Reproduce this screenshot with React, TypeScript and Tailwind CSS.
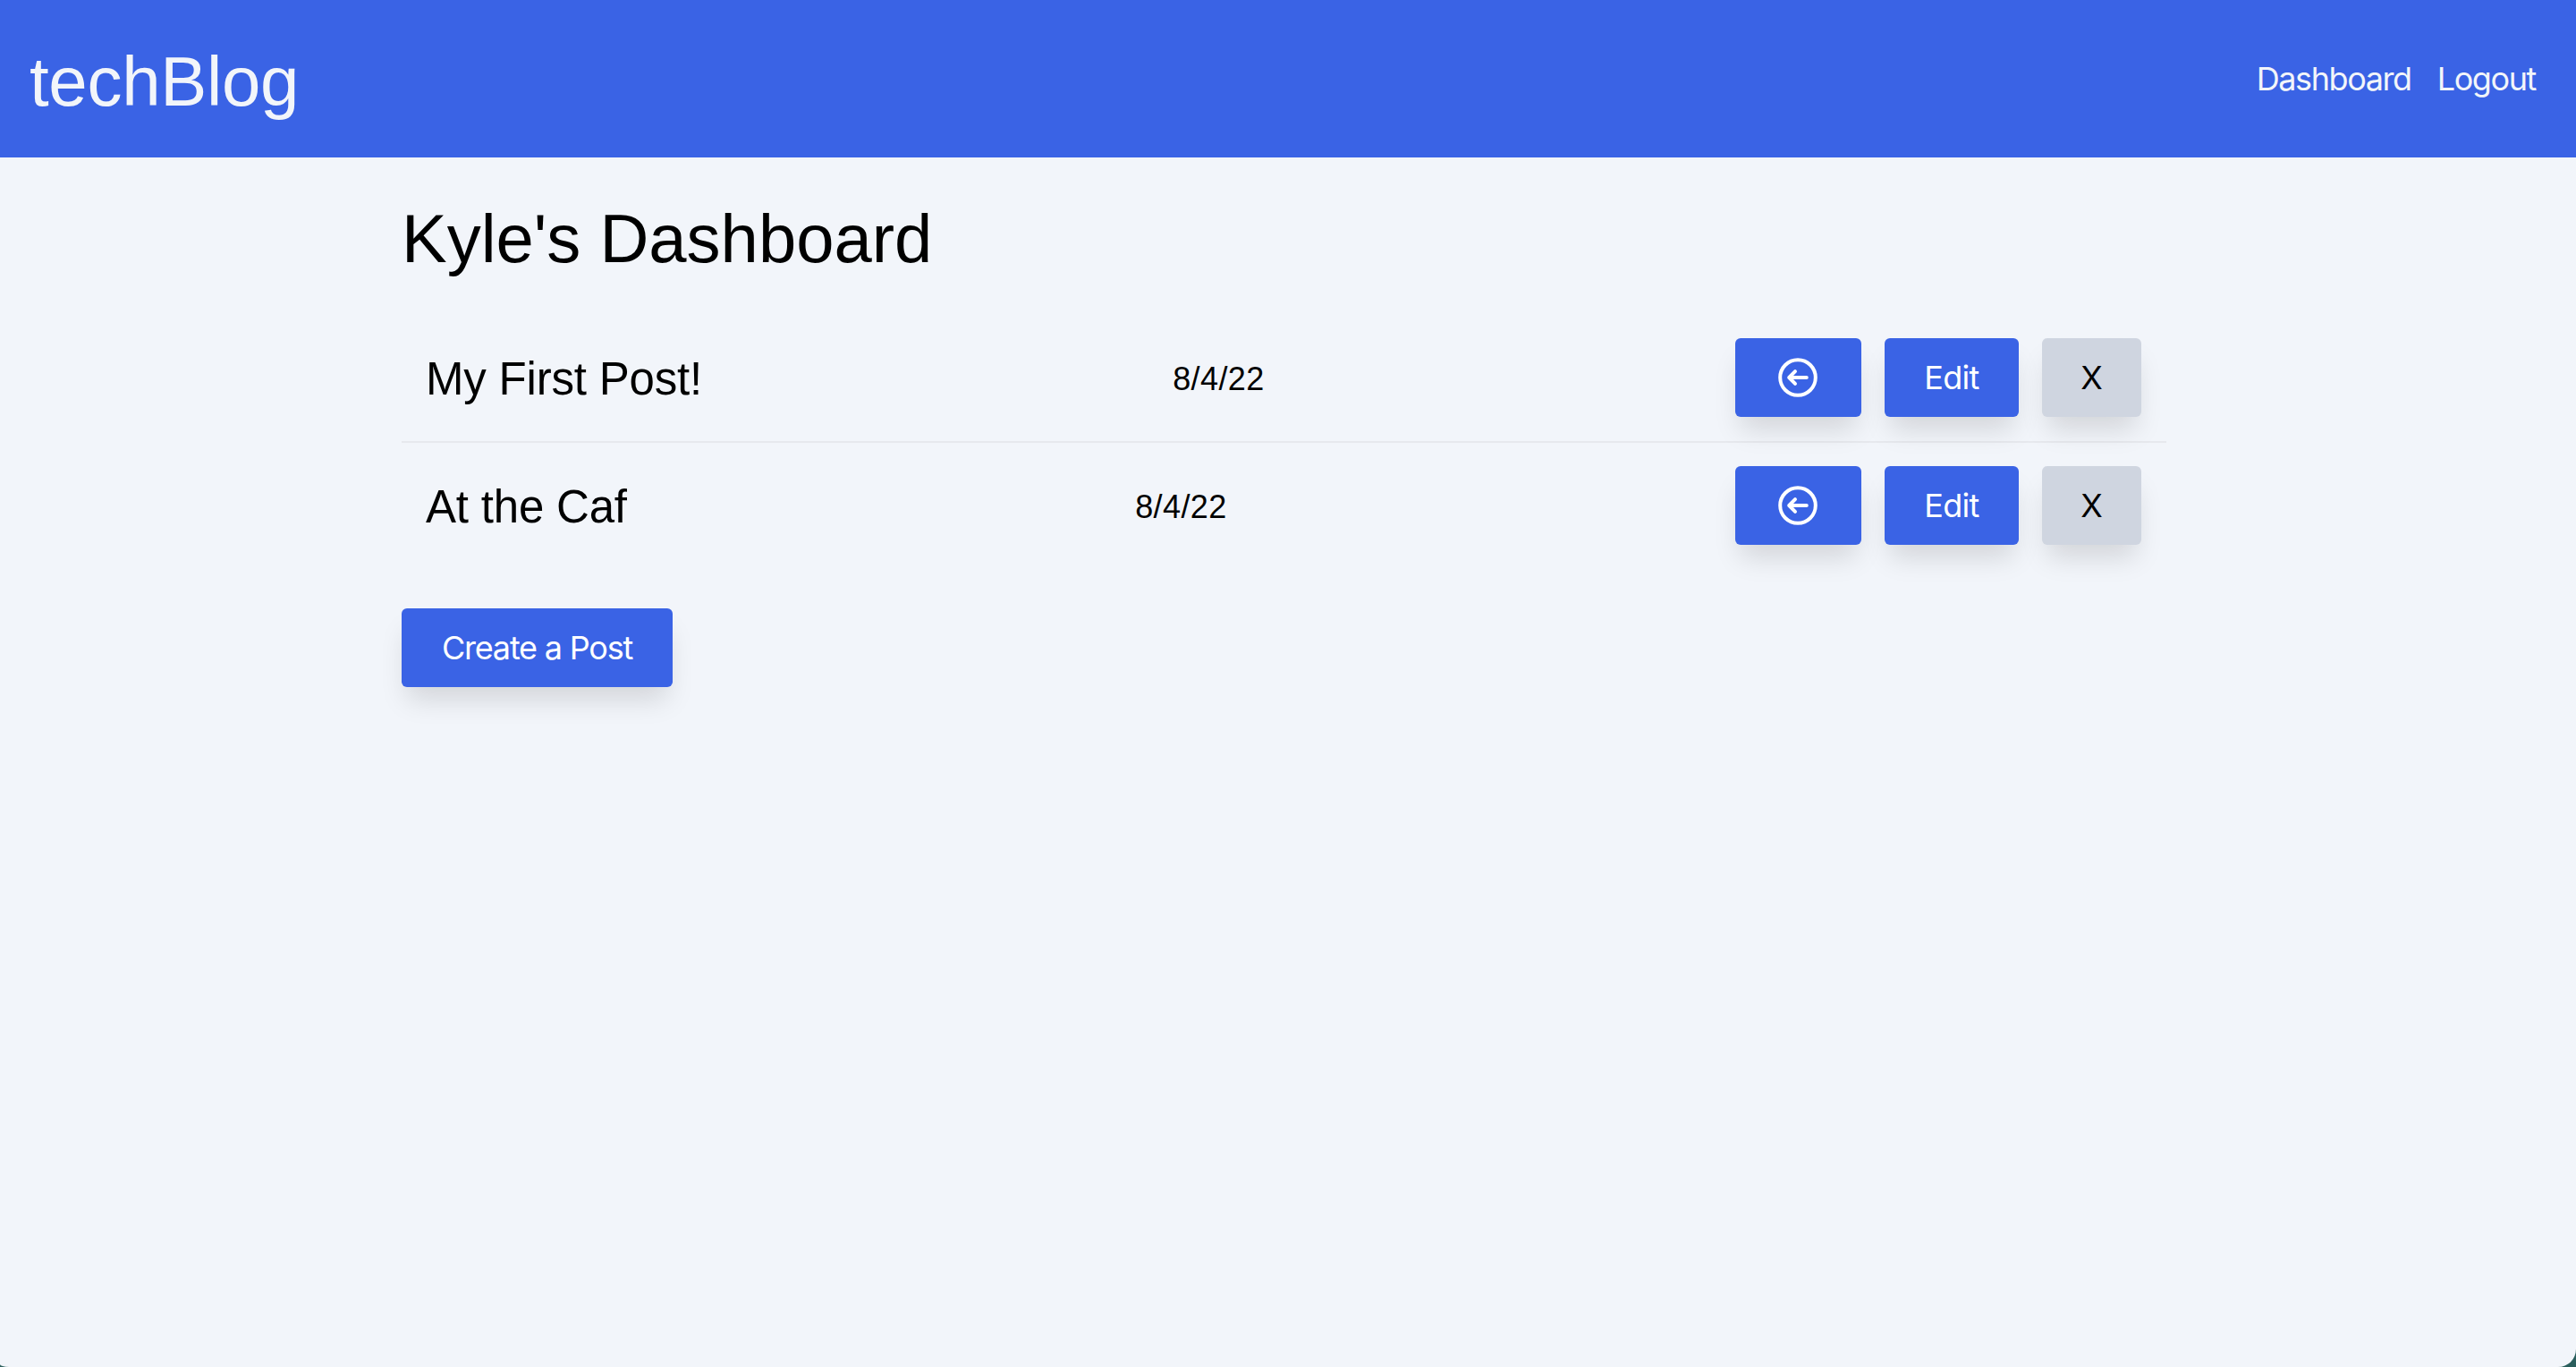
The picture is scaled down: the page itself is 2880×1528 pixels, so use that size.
import React from "react";

const shadow = "shadow-[0_20px_30px_-6px_rgba(0,0,0,0.13)]";

function ArrowCircle() {
  return (
    <svg width="48" height="48" viewBox="0 0 24 24" fill="none" stroke="currentColor" strokeWidth="2" strokeLinecap="round" strokeLinejoin="round">
      <circle cx="12" cy="12" r="9.9" />
      <path d="M10.5 8.6 7.1 12l3.4 3.4M7.1 12h9.8" />
    </svg>
  );
}

function Row({ title, border }: { title: string; border?: boolean }) {
  return (
    <div className={`flex items-center justify-between pl-[27px] pr-[28px] pt-[26px] pb-[27px] ${border ? "border-b-2 border-[#e7e9ee]" : ""}`}>
      <span className="pt-[4px] font-['Liberation_Sans',sans-serif] text-[51px] leading-[72px] tracking-[-0.2px] text-black">{title}</span>
      <span className="pt-[4px] font-['Liberation_Sans',sans-serif] text-[36px] leading-[48px] tracking-[0.4px] text-black">8/4/22</span>
      <div className="flex gap-[26px]">
        <button className={`flex h-[88px] w-[141px] items-center justify-center rounded-[6px] bg-[#3a63e5] text-white ${shadow}`}>
          <ArrowCircle />
        </button>
        <button className={`h-[88px] w-[150px] rounded-[6px] bg-[#3a63e5] text-[36px] tracking-[-0.7px] text-white ${shadow}`}>Edit</button>
        <button className={`h-[88px] w-[111px] rounded-[6px] bg-[#cfd5e0] text-[36px] text-black ${shadow}`}>X</button>
      </div>
    </div>
  );
}

export default function App() {
  return (
    <div className="h-[1528px] w-[2880px] overflow-hidden bg-[#2a5e5c] font-['Inter','Liberation_Sans',sans-serif]">
      <div className="h-full rounded-br-[20px] rounded-bl-[10px_3px] bg-[#f2f5fa]">
        <header className="flex h-[176px] items-center justify-between bg-[#3a63e5] pl-[33px] pr-[45px]">
          <h1 className="pt-[6px] font-['Liberation_Sans',sans-serif] text-[78px] leading-[96px] tracking-[-0.3px] text-[#f2f5fa]">techBlog</h1>
          <nav className="flex gap-[29px] text-[36px] leading-[48px] tracking-[-1.4px] text-[#f2f5fa]">
            <a>Dashboard</a>
            <a>Logout</a>
          </nav>
        </header>
        <main className="ml-[449px] w-[1973px] pt-[43px]">
          <h2 className="font-['Liberation_Sans',sans-serif] text-[76px] leading-[96px] text-black">Kyle's Dashboard</h2>
          <div className="mt-[37px]">
            <Row title="My First Post!" border />
            <Row title="At the Caf" />
          </div>
          <button className={`mt-[44px] h-[88px] w-[303px] rounded-[6px] bg-[#3a63e5] text-[36px] tracking-[-1.2px] text-white ${shadow}`}>Create a Post</button>
        </main>
      </div>
    </div>
  );
}
